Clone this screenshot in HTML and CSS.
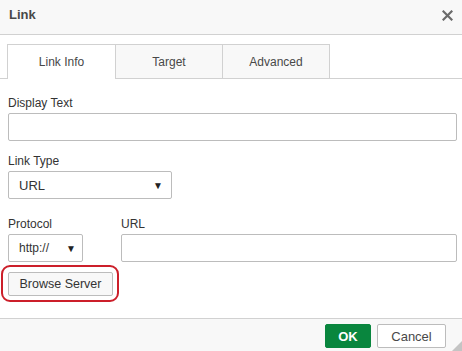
FILE: index.html
```html
<!DOCTYPE html>
<html>
<head>
<meta charset="utf-8">
<link rel="stylesheet" href="styles.css">
</head>
<body>
<div class="dialog">
  <div class="title-bar">
    <span class="title">Link</span>
    <span class="close" aria-label="Close">
      <svg width="11" height="11" viewBox="0 0 11 11"><path d="M1.5 1.5 L9.5 9.5 M9.5 1.5 L1.5 9.5" stroke="#6a6a6a" stroke-width="2.2" stroke-linecap="square"/></svg>
    </span>
  </div>
  <div class="tabs">
    <div class="tab active">Link Info</div>
    <div class="tab">Target</div>
    <div class="tab">Advanced</div>
  </div>
  <div class="content">
    <div class="field">
      <label class="label">Display Text</label>
      <div class="input wide"></div>
    </div>
    <div class="field spaced">
      <label class="label">Link Type</label>
      <div class="select type-select"><span>URL</span><span class="arrow">▼</span></div>
    </div>
    <div class="row">
      <div class="field">
        <label class="label">Protocol</label>
        <div class="select proto-select"><span>http://</span><span class="arrow">▼</span></div>
      </div>
      <div class="field grow">
        <label class="label">URL</label>
        <div class="input"></div>
      </div>
    </div>
    <div class="browse-wrap">
      <div class="highlight"></div>
      <button class="btn browse">Browse Server</button>
    </div>
  </div>
  <div class="footer">
    <button class="btn ok">OK</button>
    <button class="btn cancel">Cancel</button>
    <span class="resize"></span>
  </div>
</div>
</body>
</html>
```

FILE: styles.css
```css
html, body {
  margin: 0;
  padding: 0;
  background: #fff;
}
body {
  font-family: "Liberation Sans", Arial, sans-serif;
  font-size: 12px;
  color: #333;
}
.dialog {
  width: 462px;
  height: 351px;
  display: flex;
  flex-direction: column;
  position: relative;
  overflow: hidden;
}
.title-bar {
  height: 34px;
  background: #f8f8f8;
  border-bottom: 1px solid #d1d1d1;
  display: flex;
  align-items: center;
  justify-content: space-between;
  padding: 0 9px 0 9px;
  box-sizing: content-box;
  flex: none;
}
.title {
  font-weight: bold;
  font-size: 13px;
  color: #484848;
  margin-top: -5px;
}
.close {
  display: flex;
  margin-top: -3px;
}
.tabs {
  display: flex;
  margin-top: 9px;
  padding-left: 7px;
  border-bottom: 1px solid #d1d1d1;
  height: 34px;
  flex: none;
}
.tab {
  width: 107px;
  height: 34px;
  box-sizing: border-box;
  border: 1px solid #d1d1d1;
  border-bottom: none;
  border-left: none;
  background: #f8f8f8;
  color: #484848;
  font-size: 12px;
  display: flex;
  align-items: center;
  justify-content: center;
}
.tab.active {
  background: #fff;
  border-left: 1px solid #d1d1d1;
  width: 109px;
  height: 35px;
  margin-bottom: -1px;
}
.content {
  flex: 1;
  padding: 14px 5px 0 8px;
  display: flex;
  flex-direction: column;
}
.field {
  display: flex;
  flex-direction: column;
}
.label {
  height: 20px;
  box-sizing: border-box;
  padding-top: 2px;
  line-height: 16px;
  color: #333;
  font-size: 12px;
}
.spaced {
  margin-top: 10px;
}
.input {
  height: 28px;
  box-sizing: border-box;
  border: 1px solid #bcbcbc;
  border-radius: 2px;
  background: #fff;
}
.select {
  height: 28px;
  box-sizing: border-box;
  border: 1px solid #bcbcbc;
  border-radius: 2px;
  background: #fff;
  display: flex;
  align-items: center;
  justify-content: space-between;
  color: #333;
  font-size: 13px;
}
.type-select {
  width: 164px;
  padding: 0 8px 0 10px;
}
.proto-select {
  width: 75px;
  padding: 0 6px 0 10px;
  font-size: 12px;
}
.arrow {
  font-size: 10px;
  color: #222;
}
.row {
  display: flex;
  gap: 38px;
  margin-top: 15px;
}
.grow {
  flex: 1;
}
.browse-wrap {
  position: relative;
  margin-top: 10px;
  align-self: flex-start;
}
.highlight {
  position: absolute;
  left: -7px;
  top: -7px;
  right: -6px;
  bottom: -6px;
  border: 2px solid #cc1f2a;
  border-radius: 9px;
}
.btn {
  font-family: "Liberation Sans", Arial, sans-serif;
  font-size: 12px;
  height: 24px;
  box-sizing: border-box;
  border: 1px solid #bcbcbc;
  border-radius: 2px;
  background: #f8f8f8;
  color: #333;
  padding: 0;
  margin: 0;
}
.browse {
  width: 105px;
  display: block;
  font-size: 12.5px;
}
.footer {
  height: 27px;
  background: #f8f8f8;
  border-top: 1px solid #d1d1d1;
  display: flex;
  justify-content: flex-end;
  align-items: flex-start;
  padding: 5px 16px 0 0;
  gap: 6px;
  position: relative;
  box-sizing: content-box;
  flex: none;
}
.ok {
  width: 46px;
  background: #09863e;
  border-color: #09863e;
  color: #fff;
  font-weight: bold;
  font-size: 13px;
}
.cancel {
  width: 69px;
  background: #fff;
  color: #484848;
  font-size: 13px;
}
.resize {
  position: absolute;
  right: 0;
  bottom: 0;
  width: 0;
  height: 0;
  border-left: 10px solid transparent;
  border-bottom: 10px solid #c4c4c4;
}
```
